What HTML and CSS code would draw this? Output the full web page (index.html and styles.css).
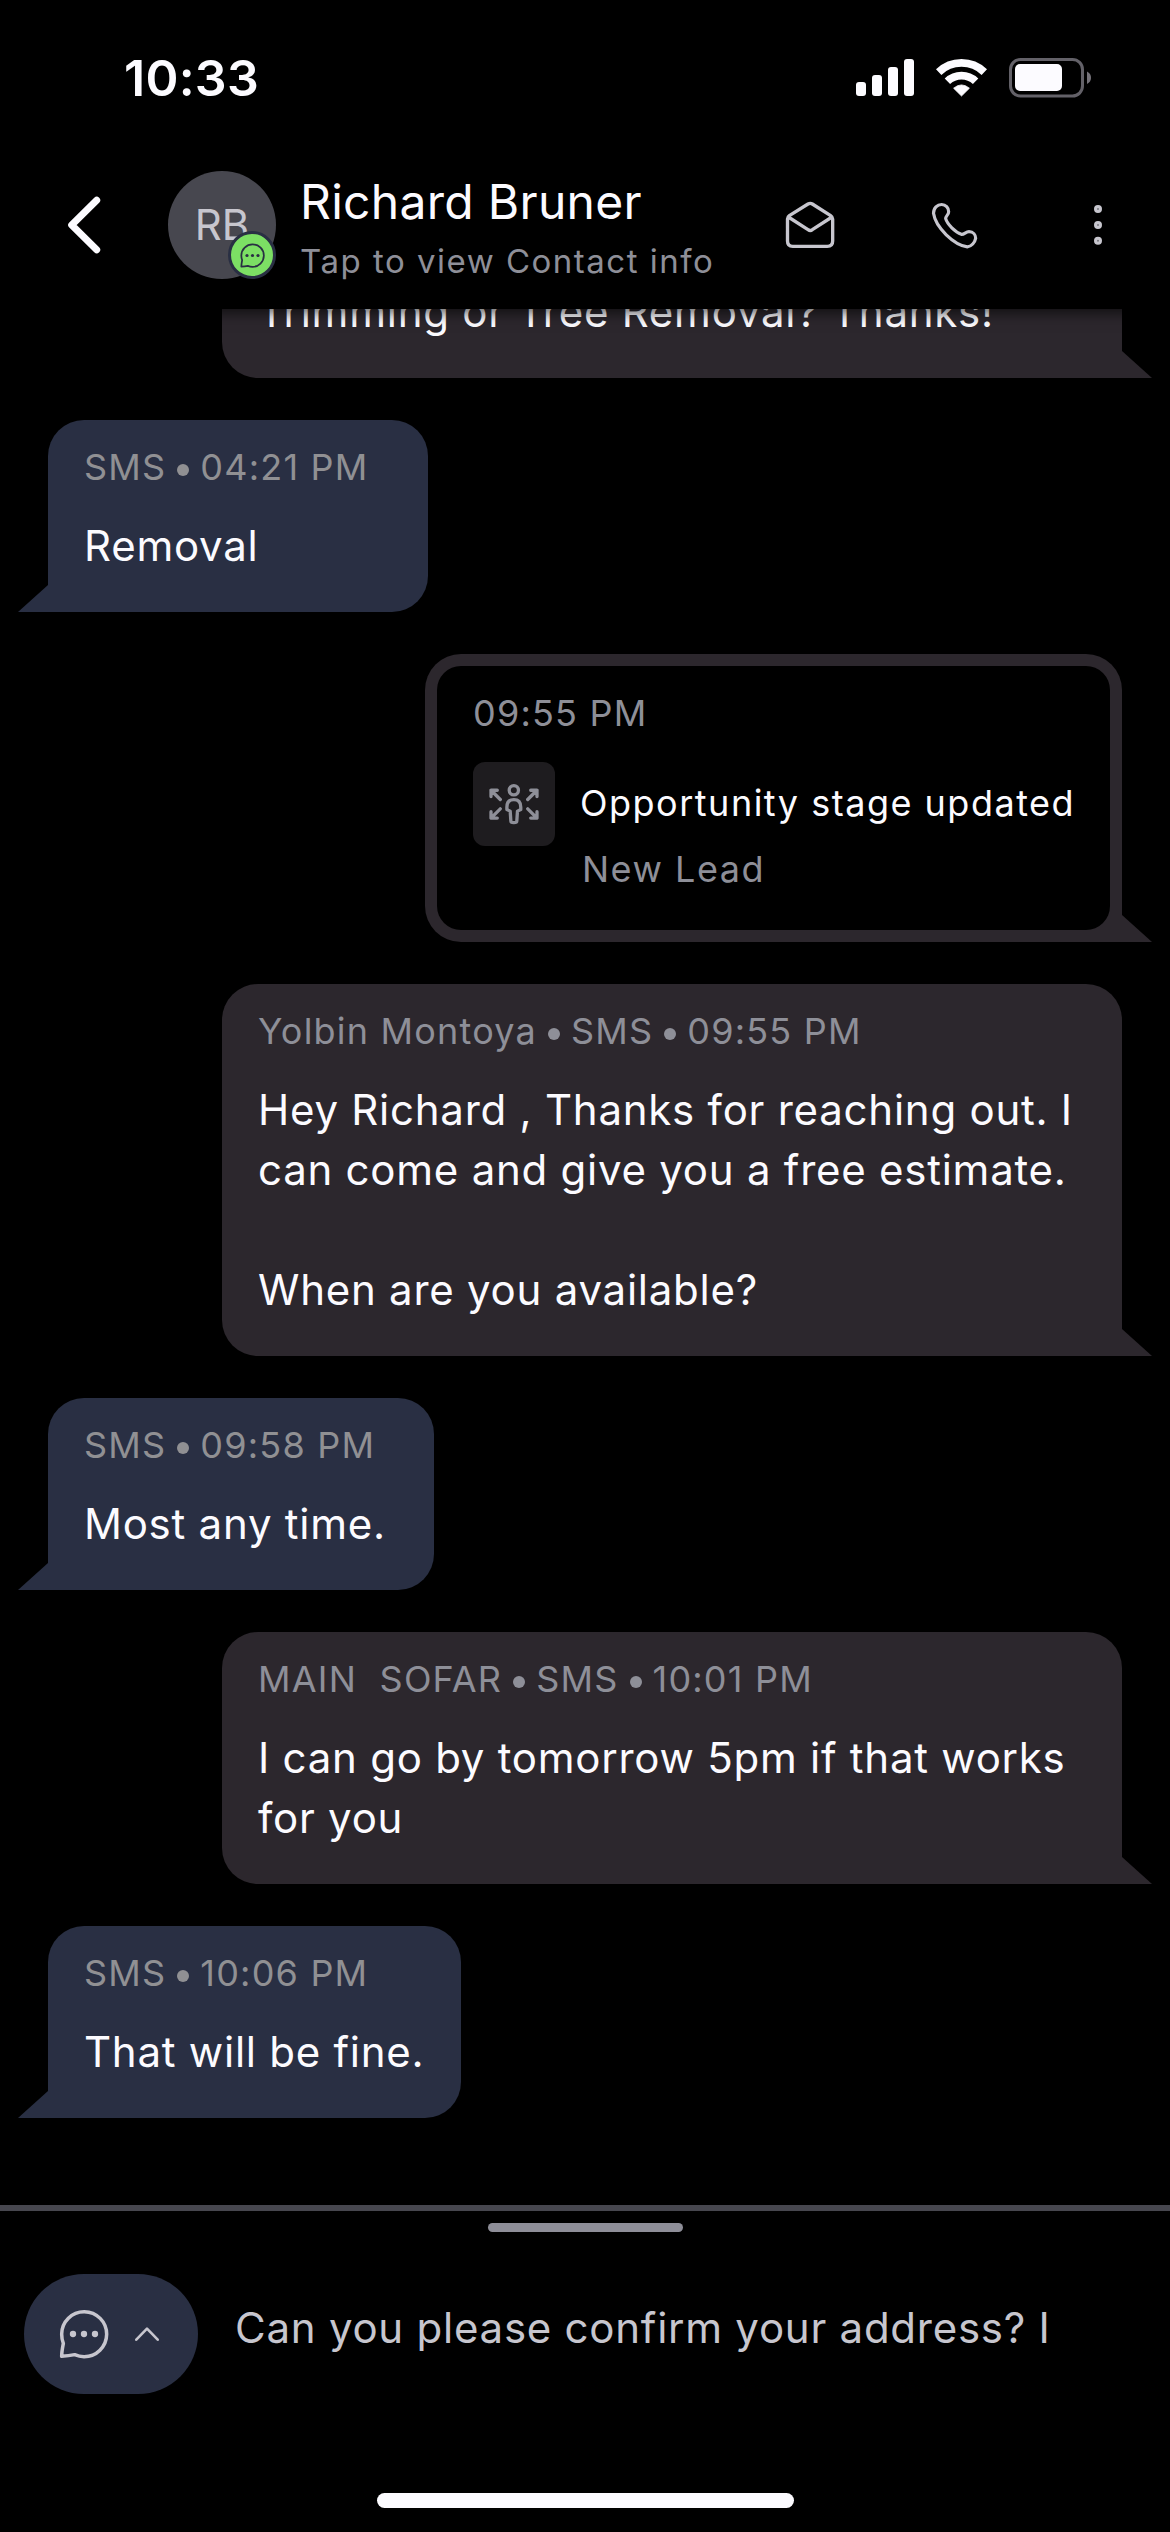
FILE: index.html
```html
<!DOCTYPE html>
<html lang="en">
<head>
<meta charset="utf-8">
<title>Richard Bruner</title>
<link rel="stylesheet" href="styles.css">
</head>
<body>
<svg class="defs" width="0" height="0" aria-hidden="true">
  <symbol id="chat" viewBox="147 147 150 150">
    <path d="M155 222A67.5 67.5 0 1 1 222 290Q208 290 194 284Q176 288 155 289Q155 276 160 250Q155 237 155 222Z" fill="none" stroke="currentColor" stroke-width="10.5" stroke-linejoin="round"/>
    <circle cx="189" cy="222" r="9.5" fill="currentColor"/>
    <circle cx="222" cy="222" r="9.5" fill="currentColor"/>
    <circle cx="255" cy="222" r="9.5" fill="currentColor"/>
  </symbol>
</svg>
<div class="screen">
  <header class="header">
    <div class="status">
      <span class="clock">10:33</span>
      <svg class="status-icons" viewBox="850 58 250 40" aria-hidden="true">
        <g fill="#fcfbff">
          <rect x="856" y="82" width="10" height="14" rx="3"/>
          <rect x="872" y="75" width="10" height="21" rx="3"/>
          <rect x="888" y="67" width="10" height="29" rx="3"/>
          <rect x="904" y="59" width="10" height="37" rx="3"/>
          <path d="M953.6 88.2Q961.5 81.6 969.4 88.2L961.5 96Z" stroke="#fcfbff" stroke-width="0.8" stroke-linejoin="round"/>
          <rect x="1015" y="64" width="47" height="27" rx="5"/>
        </g>
        <g fill="none" stroke="#fcfbff" stroke-width="7.8">
          <path d="M938.7 72.1A33 33 0 0 1 984.3 72.1"/>
          <path d="M947.4 81.2A20.4 20.4 0 0 1 975.6 81.2"/>
        </g>
        <rect x="1010.5" y="59.5" width="72" height="36.5" rx="10" fill="none" stroke="#636168" stroke-width="3"/>
        <path d="M1087 71.5Q1091 73.5 1091 77.8Q1091 82 1087 84Z" fill="#757279"/>
      </svg>
    </div>
    <div class="nav">
      <svg class="back" viewBox="66 195 36 60" aria-hidden="true"><path d="M96.7 200.3L71.7 225L96.7 249.7" fill="none" stroke="#fcfbff" stroke-width="7" stroke-linecap="round" stroke-linejoin="round"/></svg>
      <div class="avatar">RB<span class="badge"><svg viewBox="0 0 24 24"><use href="#chat"/></svg></span></div>
      <div class="who">
        <div class="name">Richard Bruner</div>
        <div class="hint">Tap to view Contact info</div>
      </div>
      <svg class="mail" viewBox="45 480 150 144" aria-hidden="true"><path d="M52.500 534Q52.500 528 58 524L114 489Q121 485 127 489L182 524Q188 528 188 534V600Q188 616 172 616H68Q52.500 616 52.500 600ZM55 528L114 566Q121 571 127 566L186 528" fill="none" stroke="#c7c6ce" stroke-width="10" stroke-linejoin="round"/></svg>
      <svg class="phone" viewBox="480 480 147 147" aria-hidden="true"><path d="M490.500 517C490.500 500 502 490.500 515 490.500C527 490.500 536 500 536 512C536 522 527 524 527 533C532 550 556 574 574 580C583 581 587 572 597 572C610 572 617 582 617 592C615 604 604 617 592 617.500C552 612 497 560 490.500 517Z" fill="none" stroke="#c7c6ce" stroke-width="9.500" stroke-linejoin="round"/></svg>
      <svg class="more" viewBox="0 0 12 42" aria-hidden="true"><g fill="#77777e" stroke="#c7c6ce" stroke-width="3"><circle cx="6" cy="5" r="2.500"/><circle cx="6" cy="21" r="2.500"/><circle cx="6" cy="36.700" r="2.500"/></g></svg>
    </div>
  </header>

  <main class="thread">
    <div class="bubble out first">
      <p>Trimming or Tree Removal? Thanks!</p>
    </div>
    <div class="bubble in w-removal">
      <div class="meta"><span>SMS</span><i></i><span>04:21 PM</span></div>
      <p>Removal</p>
    </div>
    <div class="bubble out event">
      <div class="event-body">
        <div class="meta"><span>09:55 PM</span></div>
        <div class="event-row">
          <div class="event-icon">
            <svg viewBox="84 94 161 133" aria-hidden="true"><g fill="none" stroke="#8e8f98" stroke-width="10" stroke-linecap="round" stroke-linejoin="round"><circle cx="164" cy="119" r="14"/><path d="M153 182L143 177V170Q143 147 164 147Q185 147 185 170V177L175 182L173 212Q173 217 164 217Q155 217 155 212Z"/><path d="M95 138V119H114M95 119L123 147M234 138V119H215M234 119L206 147M95 184V203H114M95 203L123 175M234 184V203H215M234 203L206 175"/></g></svg>
          </div>
          <div class="event-text">
            <div class="event-title">Opportunity stage updated</div>
            <div class="event-sub">New Lead</div>
          </div>
        </div>
      </div>
    </div>
    <div class="bubble out">
      <div class="meta"><span>Yolbin Montoya</span><i></i><span>SMS</span><i></i><span>09:55 PM</span></div>
      <p>Hey Richard , Thanks for reaching out. I<br>can come and give you a free estimate.<br><br>When are you available?</p>
    </div>
    <div class="bubble in w-time">
      <div class="meta"><span>SMS</span><i></i><span>09:58 PM</span></div>
      <p>Most any time.</p>
    </div>
    <div class="bubble out">
      <div class="meta"><span>MAIN&nbsp; SOFAR</span><i></i><span>SMS</span><i></i><span>10:01 PM</span></div>
      <p>I can go by tomorrow 5pm if that works<br>for you</p>
    </div>
    <div class="bubble in w-fine">
      <div class="meta"><span>SMS</span><i></i><span>10:06 PM</span></div>
      <p>That will be fine.</p>
    </div>
  </main>

  <footer class="composer">
    <div class="handle"></div>
    <div class="input-row">
      <div class="channel">
        <svg class="channel-icon" viewBox="0 0 50 50"><use href="#chat"/></svg>
        <svg class="channel-caret" viewBox="0 0 26 16" aria-hidden="true"><path d="M2.300 13.700L13 2.700L23.700 13.700" fill="none" stroke="#c7c6ce" stroke-width="2.600" stroke-linecap="round" stroke-linejoin="round"/></svg>
      </div>
      <div class="draft">Can you please confirm your address? I</div>
    </div>
    <div class="home"></div>
  </footer>
</div>
</body>
</html>
```
FILE: styles.css
```css
* { box-sizing: border-box; }

body {
  margin: 0;
  background: #000;
  color: #fcfbff;
  font-family: Inter, "Liberation Sans", sans-serif;
}

svg { display: block; flex: none; }
.defs { position: absolute; }

.screen {
  width: 1170px;
  height: 2532px;
  display: flex;
  flex-direction: column;
  overflow: hidden;
}

/* Header */
.header {
  flex: none;
  height: 309px;
  background: #000;
  box-shadow: 0 3px 14px rgba(0, 0, 0, 0.7);
  z-index: 1;
}

.status {
  height: 141px;
  padding: 48px 70px 0 124px;
  display: flex;
  align-items: flex-start;
  justify-content: space-between;
}

.clock {
  font-size: 50px;
  font-weight: 600;
  line-height: 60px;
  letter-spacing: 0.25px;
}

.status-icons { width: 250px; height: 40px; margin-top: 10px; }

.nav {
  height: 168px;
  padding: 0 66px;
  display: flex;
  align-items: center;
}

.back { width: 36px; height: 60px; margin-right: 66px; }

.avatar {
  position: relative;
  flex: none;
  width: 108px;
  height: 108px;
  border-radius: 50%;
  background: #47474f;
  color: #c7c6ce;
  font-size: 42px;
  line-height: 108px;
  text-align: center;
}

.badge {
  position: absolute;
  right: 0;
  bottom: 0;
  width: 48px;
  height: 48px;
  border: 3px solid #292f43;
  border-radius: 50%;
  background: #7cdf64;
  color: #292f43;
  display: flex;
  align-items: center;
  justify-content: center;
}

.badge svg { width: 25px; height: 25px; }

.who {
  width: 485px;
  padding: 4px 0 0 24px;
  display: flex;
  flex-direction: column;
  gap: 8px;
  white-space: nowrap;
}

.name { font-size: 48px; line-height: 60px; letter-spacing: 0.3px; }
.hint { font-size: 33px; line-height: 42px; letter-spacing: 1.5px; color: #8e8f98; }

.mail { width: 50px; height: 48px; margin-left: 24px; }
.phone { width: 49px; height: 49px; margin-left: 95px; }
.more { width: 12px; height: 42px; margin-left: 113px; }

/* Thread */
.thread {
  flex: 1;
  min-height: 0;
  padding: 0 48px 87px;
  display: flex;
  flex-direction: column;
  justify-content: flex-end;
  gap: 42px;
}

.bubble {
  position: relative;
  flex: none;
  padding: 23px 36px 36px;
}

.bubble::after {
  content: "";
  position: absolute;
  bottom: 0;
  width: 30px;
  height: 27px;
  background: inherit;
}

.in {
  align-self: flex-start;
  background: #292f43;
  border-radius: 36px 36px 36px 0;
}

.in::after { right: 100%; clip-path: polygon(100% 0, 100% 100%, 0 100%); }

.out {
  align-self: flex-end;
  width: 900px;
  background: #2c272d;
  border-radius: 36px 36px 0 36px;
}

.out::after { left: 100%; clip-path: polygon(0 0, 100% 100%, 0 100%); }

.w-removal { width: 380px; }
.w-time { width: 386px; }
.w-fine { width: 412.5px; }

.meta {
  display: flex;
  align-items: center;
  margin-bottom: 25px;
  font-size: 36px;
  line-height: 48px;
  letter-spacing: 1.2px;
  color: #8e8f98;
  white-space: nowrap;
}

.in .meta { color: #909093; }

.meta i {
  width: 12px;
  height: 12px;
  margin: 5px 11px 0;
  border-radius: 50%;
  background: currentColor;
}

.bubble p {
  margin: 0;
  font-size: 42px;
  line-height: 60px;
  letter-spacing: 0.75px;
  white-space: nowrap;
}

/* Event card */
.event { width: 697px; padding: 12px; }

.event-body {
  padding: 23px 36px 37px;
  border-radius: 24px;
  background: #000;
}

.event-row { display: flex; gap: 25px; }

.event-icon {
  flex: none;
  width: 82px;
  height: 84px;
  border-radius: 12px;
  background: #1e1c1f;
  display: flex;
  align-items: center;
  justify-content: center;
}

.event-icon svg { width: 54px; height: 44px; }

.event-text {
  padding-top: 17px;
  font-size: 36px;
  line-height: 48px;
  letter-spacing: 1.5px;
  white-space: nowrap;
}

.event-sub { margin: 18px 0 0 2px; color: #8e8f98; }

/* Composer */
.composer {
  flex: none;
  height: 327px;
  border-top: 6px solid #47474f;
  padding: 12px 24px 24px;
  display: flex;
  flex-direction: column;
  align-items: center;
}

.handle { width: 195px; height: 9px; border-radius: 5px; background: #8e8e98; }

.input-row {
  align-self: stretch;
  margin-top: 42px;
  display: flex;
  align-items: flex-start;
}

.channel {
  flex: none;
  width: 174px;
  height: 120px;
  padding-left: 35px;
  border-radius: 60px;
  background: #292f43;
  color: #c7c6ce;
  display: flex;
  align-items: center;
}

.channel-icon { width: 50px; height: 50px; }
.channel-caret { width: 26px; height: 16px; margin-left: 25px; }

.draft {
  margin: 24px 0 0 37px;
  font-size: 42px;
  line-height: 60px;
  letter-spacing: 0.75px;
  color: #c7c6ce;
  white-space: nowrap;
}

.home {
  width: 417px;
  height: 15px;
  margin-top: auto;
  border-radius: 8px;
  background: #fcfbff;
}
```
